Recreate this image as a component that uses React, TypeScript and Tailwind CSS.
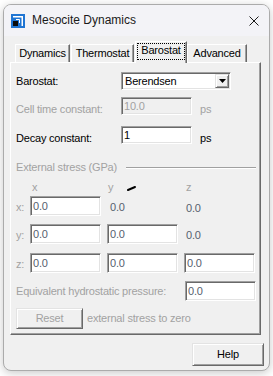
import React from "react";

const sunken =
  "border border-t-[#a0a0a0] border-l-[#a0a0a0] border-r-white border-b-white shadow-[inset_1px_1px_0_#696969,inset_-1px_-1px_0_#e3e3e3]";
const raised =
  "border border-t-[#e3e3e3] border-l-[#e3e3e3] border-r-[#696969] border-b-[#696969] shadow-[inset_1px_1px_0_#ffffff,inset_-1px_-1px_0_#a0a0a0]";

const valColor = "text-[#56606e]";
const dis = "text-[#a2a2a2]";

function Field({ value, w = "w-[71px]", h = "h-[20px]", color = valColor, bg = "bg-white" }: { value: string; w?: string; h?: string; color?: string; bg?: string }) {
  return (
    <div className={`${sunken} ${w} ${h} ${bg} flex items-center pl-[2px] ${color}`}>{value}</div>
  );
}

export default function App() {
  return (
    <div className="relative w-[273px] h-[376px] bg-white overflow-hidden font-['Liberation_Sans',Arial,sans-serif] text-[11px] tracking-[-0.2px] leading-[13px] text-black">
      <div className="ml-[3px] mt-[4px] w-[267px] h-[367px] rounded-[8px] border border-[#ababab] overflow-hidden flex flex-col bg-[#f0f0f0] shadow-[0_2px_10px_rgba(0,0,0,0.22)]">
        {/* Title bar */}
        <div className="h-[31px] shrink-0 bg-[#f3f3f7] flex items-center pl-[7px] pr-[10px]">
          <svg width="14" height="14" viewBox="0 0 14 14">
            <rect x="0" y="0" width="14" height="14" fill="#1f75d3" />
            <path d="M2 2.75H11.25V12" stroke="#ffffff" strokeWidth="1.5" fill="none" />
            <path d="M5 5.5H8.5V9" stroke="#ffffff" strokeWidth="1" fill="none" />
            <rect x="2" y="7" width="5" height="5" fill="#0b0b0b" />
          </svg>
          <span className="ml-[7px] text-[12px] tracking-normal text-[#1a1a1a]">Mesocite Dynamics</span>
          <svg className="ml-auto" width="10" height="10" viewBox="0 0 10 10">
            <path d="M0.5 0.5L9.5 9.5M9.5 0.5L0.5 9.5" stroke="#1a1a1a" strokeWidth="1" />
          </svg>
        </div>

        {/* Body */}
        <div className="flex-1 flex flex-col pl-[6px] pt-[5px]">
          {/* Tabs */}
          <div className="flex items-end h-[21px]">
            <div className="ml-[5px] w-[55px] h-[18px] flex items-center justify-center border-l border-t border-l-white border-t-white border-r border-r-[#696969] shadow-[inset_-1px_0_0_#a0a0a0]">
              Dynamics
            </div>
            <div className="ml-[1px] w-[63px] h-[18px] flex items-center justify-center border-l border-t border-l-white border-t-white border-r border-r-[#696969] shadow-[inset_-1px_0_0_#a0a0a0]">
              Thermostat
            </div>
            <div className="relative z-10 -mb-px ml-[1px] w-[52px] h-[22px] flex bg-[#f0f0f0] border-l border-t border-l-white border-t-white border-r border-r-[#696969] shadow-[inset_-1px_0_0_#a0a0a0] pl-[1px] pr-[1px] pt-[1px] pb-[3px]">
              <div className="flex-1 flex items-center justify-center border border-dotted border-black pb-[2px]">
                Barostat
              </div>
            </div>
            <div className="w-[60px] h-[18px] flex items-center justify-center border-l border-t border-l-white border-t-white border-r border-r-[#696969] shadow-[inset_-1px_0_0_#a0a0a0]">
              Advanced
            </div>
          </div>

          {/* Panel */}
          <div className="w-[251px] h-[273px] shrink-0 border border-t-white border-l-white border-r-[#696969] border-b-[#696969] shadow-[inset_-1px_-1px_0_#a0a0a0] flex flex-col pl-[5px] pr-[4px]">
            {/* Barostat */}
            <div className="mt-[9px] h-[18px] flex items-center">
              <div className="w-[105px]">Barostat:</div>
              <div className={`${sunken} w-[110px] h-[18px] bg-white flex p-[1px]`}>
                <div className="flex-1 flex items-center pl-[2px]">Berendsen</div>
                <div className={`${raised} w-[14px] bg-[#f0f0f0] flex items-center justify-center`}>
                  <svg width="7" height="4" viewBox="0 0 7 4">
                    <path d="M0 0H7L3.5 4Z" fill="#000" />
                  </svg>
                </div>
              </div>
            </div>

            {/* Cell time constant */}
            <div className="mt-[7px] h-[18px] flex items-center">
              <div className={`w-[105px] pt-[7px] ${dis}`}>Cell time constant:</div>
              <Field value="10.0" h="h-[18px]" color={dis} bg="bg-[#f0f0f0]" />
              <div className={`ml-[8px] pt-[7px] ${dis}`}>ps</div>
            </div>

            {/* Decay constant */}
            <div className="mt-[11px] h-[18px] flex items-center">
              <div className="w-[105px] pt-[7px]">Decay constant:</div>
              <Field value="1" h="h-[18px]" color="text-black" />
              <div className="ml-[8px] pt-[7px]">ps</div>
            </div>

            {/* Group header */}
            <div className="mt-[17px] h-[13px] flex items-center">
              <div className={dis}>External stress (GPa)</div>
              <div className="flex-1 ml-[9px] h-[2px] border-t border-t-[#a0a0a0] border-b border-b-white" />
            </div>

            {/* Column headers */}
            <div className={`mt-[7px] h-[13px] flex ${dis}`}>
              <div className="w-[14px]" />
              <div className="w-[71px] pl-[2px]">x</div>
              <div className="ml-[6px] w-[71px] pl-[1px]">y</div>
              <div className="ml-[6px] w-[71px] pl-[2px]">z</div>
            </div>

            {/* Row x */}
            <div className="mt-[2px] h-[20px] flex items-center">
              <div className={`w-[14px] pt-[3px] ${dis}`}>x:</div>
              <Field value="0.0" />
              <div className={`ml-[6px] w-[71px] pl-[3px] pt-[2px] ${valColor}`}>0.0</div>
              <div className={`ml-[6px] w-[71px] pl-[2px] pt-[5px] ${valColor}`}>0.0</div>
            </div>

            {/* Row y */}
            <div className="mt-[8px] h-[20px] flex items-center">
              <div className={`w-[14px] pt-[3px] ${dis}`}>y:</div>
              <Field value="0.0" />
              <div className="ml-[6px]">
                <Field value="0.0" />
              </div>
              <div className={`ml-[6px] w-[71px] pl-[2px] pt-[2px] ${valColor}`}>0.0</div>
            </div>

            {/* Row z */}
            <div className="mt-[9px] h-[20px] flex items-center">
              <div className={`w-[14px] pt-[3px] ${dis}`}>z:</div>
              <Field value="0.0" />
              <div className="ml-[6px]">
                <Field value="0.0" />
              </div>
              <div className="ml-[6px]">
                <Field value="0.0" />
              </div>
            </div>

            {/* Equivalent */}
            <div className="mt-[8px] h-[20px] flex items-center">
              <div className={`flex-1 ${dis}`}>Equivalent hydrostatic pressure:</div>
              <Field value="0.0" />
            </div>

            {/* Reset */}
            <div className="mt-[7px] h-[21px] flex items-center">
              <div className={`${raised} w-[67px] h-[21px] bg-[#f0f0f0] flex items-center justify-center ${dis}`}>
                Reset
              </div>
              <div className={`ml-[4px] ${dis}`}>external stress to zero</div>
            </div>
          </div>

          {/* Help */}
          <div className="mt-[8px] ml-[182px] w-[72px] h-[23px] flex">
            <div className={`${raised} flex-1 bg-[#f0f0f0] flex items-center justify-center`}>Help</div>
          </div>
        </div>
      </div>

      {/* mouse cursor artifact */}
      <svg className="absolute left-[126px] top-[184px]" width="12" height="8" viewBox="0 0 12 8">
        <path d="M2 6L9 3" stroke="#000" strokeWidth="2" strokeLinecap="round" />
      </svg>
    </div>
  );
}
